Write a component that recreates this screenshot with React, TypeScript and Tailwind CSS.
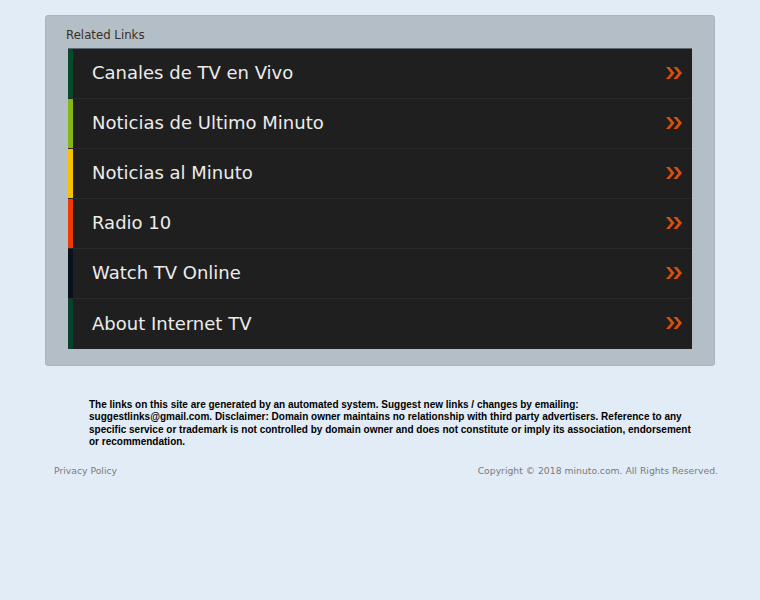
const links = [
  { label: "Canales de TV en Vivo", color: "bg-[#054a2c]" },
  { label: "Noticias de Ultimo Minuto", color: "bg-[#85b712]" },
  { label: "Noticias al Minuto", color: "bg-[#f7c100]" },
  { label: "Radio 10", color: "bg-[#f03a06]" },
  { label: "Watch TV Online", color: "bg-[#06131f]" },
  { label: "About Internet TV", color: "bg-[#05432d]" },
];

function Chevrons() {
  return (
    <svg width="18" height="14" viewBox="0 0 18 14" className="shrink-0">
      <path d="M1 1 L6 7 L1 13 H4.5 L9.5 7 L4.5 1 Z" fill="#d9500c" />
      <path d="M8.5 1 L13.5 7 L8.5 13 H12 L17 7 L12 1 Z" fill="#d9500c" />
    </svg>
  );
}

export default function App() {
  return (
    <div className="min-h-[600px] w-full bg-[#e2ecf6] font-['DejaVu_Sans',sans-serif]">
      <div className="w-[670px] ml-[45px] pt-[15px]">
        <div className="rounded-[3px] border border-[#a9b4bc] bg-[#b3bec6] px-[22px] pt-[10px] pb-[16px]">
          <div className="text-[11.75px] text-[#3b2e1e] leading-[18px] mb-[4px] -ml-[2px]">Related Links</div>
          <ul className="border-t border-[#5f6870]">
            {links.map((l) => (
              <li key={l.label} className="flex h-[50px] bg-[#1f1f1f] border-b border-[#2a2a2a] last:border-b-0">
                <div className={`w-[5px] ${l.color}`} />
                <div className="flex flex-1 items-center justify-between pl-[19px] pr-[9px] pb-[2px]">
                  <span className="text-[18px] text-[#ececec]">{l.label}</span>
                  <Chevrons />
                </div>
              </li>
            ))}
          </ul>
        </div>
      </div>
      <div className="w-[610px] ml-[89px] mt-[33px] font-['Liberation_Sans',sans-serif] text-[10px] leading-[12.3px] font-bold text-black">
        The links on this site are generated by an automated system. Suggest new links / changes by emailing: suggestlinks@gmail.com. Disclaimer: Domain owner maintains no relationship with third party advertisers. Reference to any specific service or trademark is not controlled by domain owner and does not constitute or imply its association, endorsement or recommendation.
      </div>
      <div className="flex justify-between pl-[54px] pr-[42px] mt-[16px] text-[9.25px] text-[#7a7a7a]">
        <span>Privacy Policy</span>
        <span>Copyright © 2018 minuto.com. All Rights Reserved.</span>
      </div>
    </div>
  );
}
